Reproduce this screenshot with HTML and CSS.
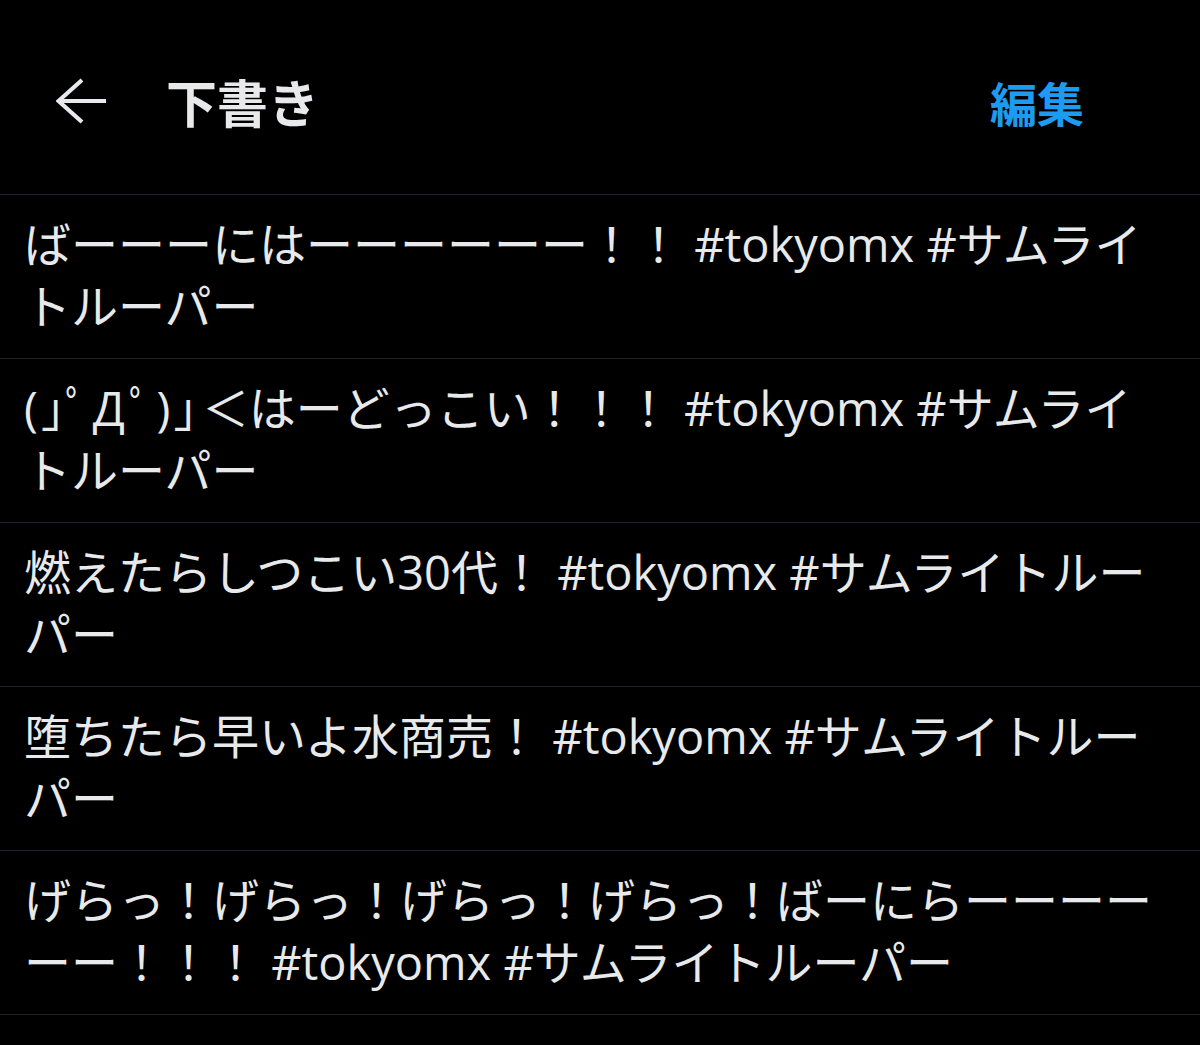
FILE: index.html
```html
<!DOCTYPE html>
<html lang="ja">
<head>
<meta charset="utf-8">
<title>下書き</title>
<link rel="stylesheet" href="styles.css">
</head>
<body>
<div class="screen">
  <header class="topbar">
    <button class="back" aria-label="戻る">
      <svg class="back-icon" viewBox="0 0 52 48" width="52" height="48" aria-hidden="true">
        <polyline points="26,3 2.5,24 26,45" fill="none" stroke="currentColor" stroke-width="4.2" stroke-linejoin="miter"/>
        <line x1="3" y1="24" x2="50" y2="24" stroke="currentColor" stroke-width="4.2"/>
      </svg>
    </button>
    <h1 class="title">下書き</h1>
    <button class="edit">編集</button>
  </header>
  <ul class="drafts">
    <li class="draft">ばーーーにはーーーーーー！！ #tokyomx #サムライトルーパー</li>
    <li class="draft"><span class="kao">(」ﾟДﾟ)」</span>＜はーどっこい！！！ #tokyomx #サムライトルーパー</li>
    <li class="draft">燃えたらしつこい30代！ #tokyomx #サムライトルーパー</li>
    <li class="draft">堕ちたら早いよ水商売！ #tokyomx #サムライトルーパー</li>
    <li class="draft">げらっ！げらっ！げらっ！げらっ！ばーにらーーーーーー！！！ #tokyomx #サムライトルーパー</li>
  </ul>
</div>
</body>
</html>
```
FILE: styles.css
```css
html, body {
  margin: 0;
  padding: 0;
  background: #000;
}
body {
  font-family: "Open Sans", "Noto Sans CJK JP", sans-serif;
  color: #e7e9ea;
}
.screen {
  width: 1200px;
  min-height: 1045px;
  background: #000;
}
.topbar {
  box-sizing: border-box;
  height: 195px;
  padding: 8px 116px 0 56px;
  display: flex;
  align-items: center;
  border-bottom: 1px solid #202327;
}
.back {
  background: none;
  border: 0;
  padding: 0;
  margin: 0;
  color: #e7e9ea;
  display: flex;
  align-items: center;
}
.back-icon {
  display: block;
}
.title {
  margin: 0 0 0 58px;
  font-family: "Noto Sans CJK JP", sans-serif;
  font-size: 51px;
  font-weight: 700;
  line-height: 1;
  flex: 1;
  color: #e7e9ea;
}
.edit {
  background: none;
  border: 0;
  padding: 0;
  font-family: "Noto Sans CJK JP", sans-serif;
  font-size: 47px;
  font-weight: 700;
  line-height: 1;
  color: #1d9bf0;
}
.drafts {
  list-style: none;
  margin: 0;
  padding: 0;
}
.draft {
  padding: 18px 30px 21px 24px;
  font-size: 47px;
  line-height: 62px;
  border-bottom: 1px solid #202327;
  line-break: loose;
  word-break: normal;
}
.kao {
  font-feature-settings: "palt";
  letter-spacing: 4px;
}
```
